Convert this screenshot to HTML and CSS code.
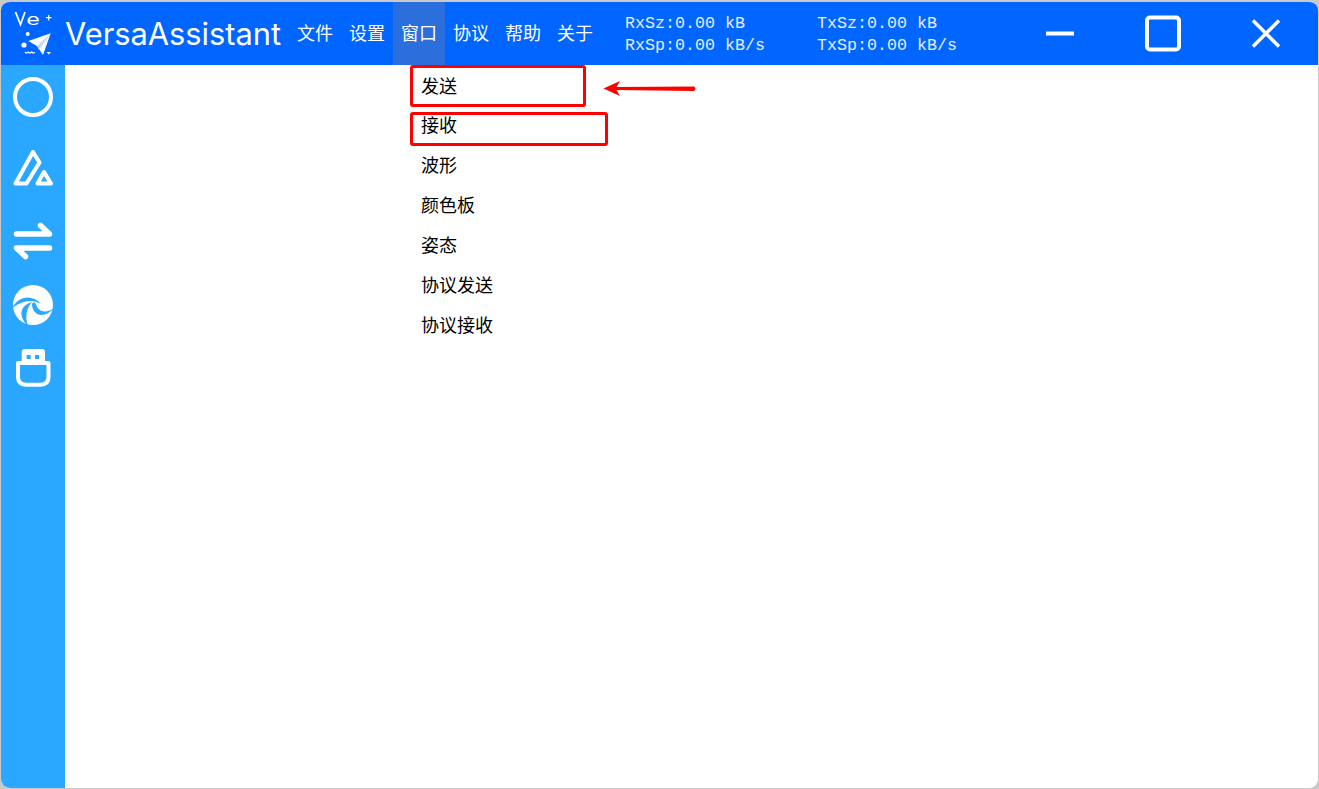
FILE: index.html
```html
<!DOCTYPE html>
<html lang="zh">
<head>
<meta charset="utf-8">
<title>VersaAssistant</title>
<link rel="stylesheet" href="styles.css">
</head>
<body>
<div class="window">
  <header class="titlebar">
    <svg class="logo" width="50" height="53" viewBox="0 0 50 53">
      <path class="logo-line" d="M1.500 5 L6.500 17.500 L11 5"/>
      <text class="logo-e" transform="translate(12.500 17.500) scale(1.500 1)">e</text>
      <path class="logo-line thin" d="M32 10.700 h5.500 M34.700 8 v5.500"/>
      <circle class="logo-fill" cx="13.700" cy="27" r="2"/>
      <circle class="logo-fill" cx="10" cy="38" r="2.600"/>
      <path class="logo-fill" d="M36.700 26.300 L14.300 34 L23 39 L29 48 Z"/>
      <path class="logo-fold" d="M36.700 26.300 L23 39 L25 43 Z"/>
      <path class="logo-line thin" d="M11 45 q1.700 2 3.300 0 q1.700 2 3.300 0 q1.700 2 3.300 0"/>
      <path class="logo-fill" d="M32.500 45 h4.500 l-2.200 2.500 Z"/>
    </svg>
    <div class="app-name">VersaAssistant</div>
    <nav class="menu">
      <span class="menu-item">文件</span>
      <span class="menu-item">设置</span>
      <span class="menu-item active">窗口</span>
      <span class="menu-item">协议</span>
      <span class="menu-item">帮助</span>
      <span class="menu-item">关于</span>
    </nav>
    <div class="stats">
      <div class="stat-col">
        <div>RxSz:0.00 kB</div>
        <div>RxSp:0.00 kB/s</div>
      </div>
      <div class="stat-col">
        <div>TxSz:0.00 kB</div>
        <div>TxSp:0.00 kB/s</div>
      </div>
    </div>
    <div class="controls">
      <button class="control"><svg width="40" height="40" viewBox="0 0 40 40"><path class="ctl" d="M6 19.500 H34"/></svg></button>
      <button class="control"><svg width="40" height="40" viewBox="0 0 40 40"><rect class="ctl" x="4" y="3.500" width="32" height="32" rx="3"/></svg></button>
      <button class="control"><svg width="40" height="40" viewBox="0 0 40 40"><path class="ctl-x" d="M7 6.500 L33 32.500 M33 6.500 L7 32.500"/></svg></button>
    </div>
  </header>
  <div class="body">
    <aside class="sidebar">
      <svg class="side-icon" width="44" height="44" viewBox="0 0 44 44"><circle class="icon" cx="22" cy="22" r="18"/></svg>
      <svg class="side-icon" width="44" height="44" viewBox="0 0 44 44"><path class="icon" d="M22 5 L28.500 15.500 L15.500 36.500 H4.500 Z M33 25 L40 36.500 H26.500 Z"/></svg>
      <svg class="side-icon" width="44" height="44" viewBox="0 0 44 44"><path class="icon thick" d="M5.500 15 H38.500 L29.500 6.500 M38.500 29 H5.500 L14.500 37.500"/></svg>
      <svg class="side-icon gap-small" width="44" height="44" viewBox="0 0 44 44">
        <circle class="fill" cx="22" cy="22" r="20"/>
        <path class="cut" d="M1 25 C7 14 20 10 30 21 C21 16 12 17 1 25 Z"/>
        <path class="cut" d="M21 19 C10 22 6 32 17 43 C14 34 15 26 21 19 Z"/>
        <path class="cut" d="M21 21 C21 32 33 37 43 25 C35 31 27 29 25 21 C24 19 22 19 21 21 Z"/>
      </svg>
      <svg class="side-icon gap-tight" width="44" height="44" viewBox="0 0 44 44">
        <path class="icon" d="M7 17 H37.500 V31 C37.500 36 34.500 38.700 29.500 38.700 H15 C10 38.700 7 36 7 31 Z"/>
        <path class="fill" d="M10.700 15 V6 C10.700 4 12 3 14 3 H31 C33 3 34 4 34 6 V15 Z"/>
        <path class="cut" d="M15.700 9 h4 v4 h-4 Z M24 9 h4 v4 h-4 Z"/>
      </svg>
    </aside>
    <main class="content">
      <ul class="dropdown">
        <li class="drop-item">发送</li>
        <li class="drop-item">接收</li>
        <li class="drop-item">波形</li>
        <li class="drop-item">颜色板</li>
        <li class="drop-item">姿态</li>
        <li class="drop-item">协议发送</li>
        <li class="drop-item">协议接收</li>
      </ul>
    </main>
  </div>
  <div class="mark mark-send"></div>
  <div class="mark mark-recv"></div>
  <svg class="mark-arrow" width="96" height="20" viewBox="0 0 96 20">
    <path d="M1.500 10.500 L18 3 L14.500 9 L92 8.500 Q95 10.700 92 13 L14.500 12 L18 18 Z"/>
  </svg>
</div>
</body>
</html>
```
FILE: styles.css
```css
* { box-sizing: border-box; }
html, body { margin: 0; padding: 0; height: 100%; background: #c9c9c9; }
body { width: 1319px; height: 789px; overflow: hidden; font-family: "Noto Sans CJK SC", "Noto Sans", sans-serif; }

.window {
  position: relative;
  width: 1319px;
  height: 789px;
  border: solid #c9c9c9;
  border-width: 2px 1px 1px;
  border-radius: 10px;
  overflow: hidden;
  background: #fff;
  display: flex;
  flex-direction: column;
}

.titlebar {
  height: 63px;
  flex: none;
  background: #0066ff;
  color: #fff;
  display: flex;
  align-items: center;
}

.logo { flex: none; margin-left: 13px; }
.logo-line { fill: none; stroke: #fff; stroke-width: 1.800; }
.logo-line.thin { stroke-width: 1.200; }
.logo-fill { fill: #fff; }
.logo-fold { fill: #c5d8fb; }
.logo-e { fill: #fff; font: 400 16px "Liberation Sans", sans-serif; }

.app-name {
  flex: none;
  margin-left: 1px;
  width: 224px;
  font: 400 30.800px/63px Inter, Roboto, sans-serif;
  white-space: nowrap;
}

.menu { display: flex; flex: none; height: 63px; }
.menu-item { width: 52px; text-align: center; font-size: 18px; line-height: 60px; }
.menu-item.active { background: #2a6fdc; }

.stats {
  display: flex;
  flex: none;
  margin-left: 24px;
  width: 384px;
  padding-top: 2px;
  font: 400 16.670px/22px "Liberation Mono", monospace;
  color: #e6edff;
}
.stat-col { width: 192px; white-space: nowrap; }

.controls { display: flex; flex: none; margin-left: -1px; }
.control {
  width: 103px;
  height: 63px;
  padding: 0;
  border: 0;
  background: none;
  display: flex;
  align-items: center;
  justify-content: center;
}
.ctl { fill: none; stroke: #fff; stroke-width: 4; }
.ctl-x { fill: none; stroke: #fff; stroke-width: 3.500; }

.body { flex: 1; display: flex; min-height: 0; }
.sidebar {
  width: 64px;
  flex: none;
  background: #2aa8ff;
  display: flex;
  flex-direction: column;
  align-items: center;
  padding-top: 10px;
  gap: 28px;
}
.side-icon { display: block; flex: none; }
.gap-small { margin-top: -8px; }
.gap-tight { margin-top: -9px; }
.icon { fill: none; stroke: #fff; stroke-width: 4; stroke-linejoin: round; stroke-linecap: round; }
.icon.thick { stroke-width: 5.500; }
.fill { fill: #fff; }
.cut { fill: #2aa8ff; }

.content { flex: 1; background: #fff; }
.dropdown { list-style: none; margin: 0 0 0 328px; padding: 0; width: 196px; }
.drop-item { height: 40px; padding-left: 28px; font-size: 18px; line-height: 40px; color: #000; }
.drop-item:first-child { height: 39px; }

.mark { position: absolute; border: 3px solid #ff0000; border-radius: 3px; }
.mark-send { left: 409px; top: 63px; width: 176px; height: 42px; }
.mark-recv { left: 409px; top: 110px; width: 198px; height: 34px; }
.mark-arrow { position: absolute; left: 601px; top: 76px; }
.mark-arrow path { fill: #ff0000; }
```
